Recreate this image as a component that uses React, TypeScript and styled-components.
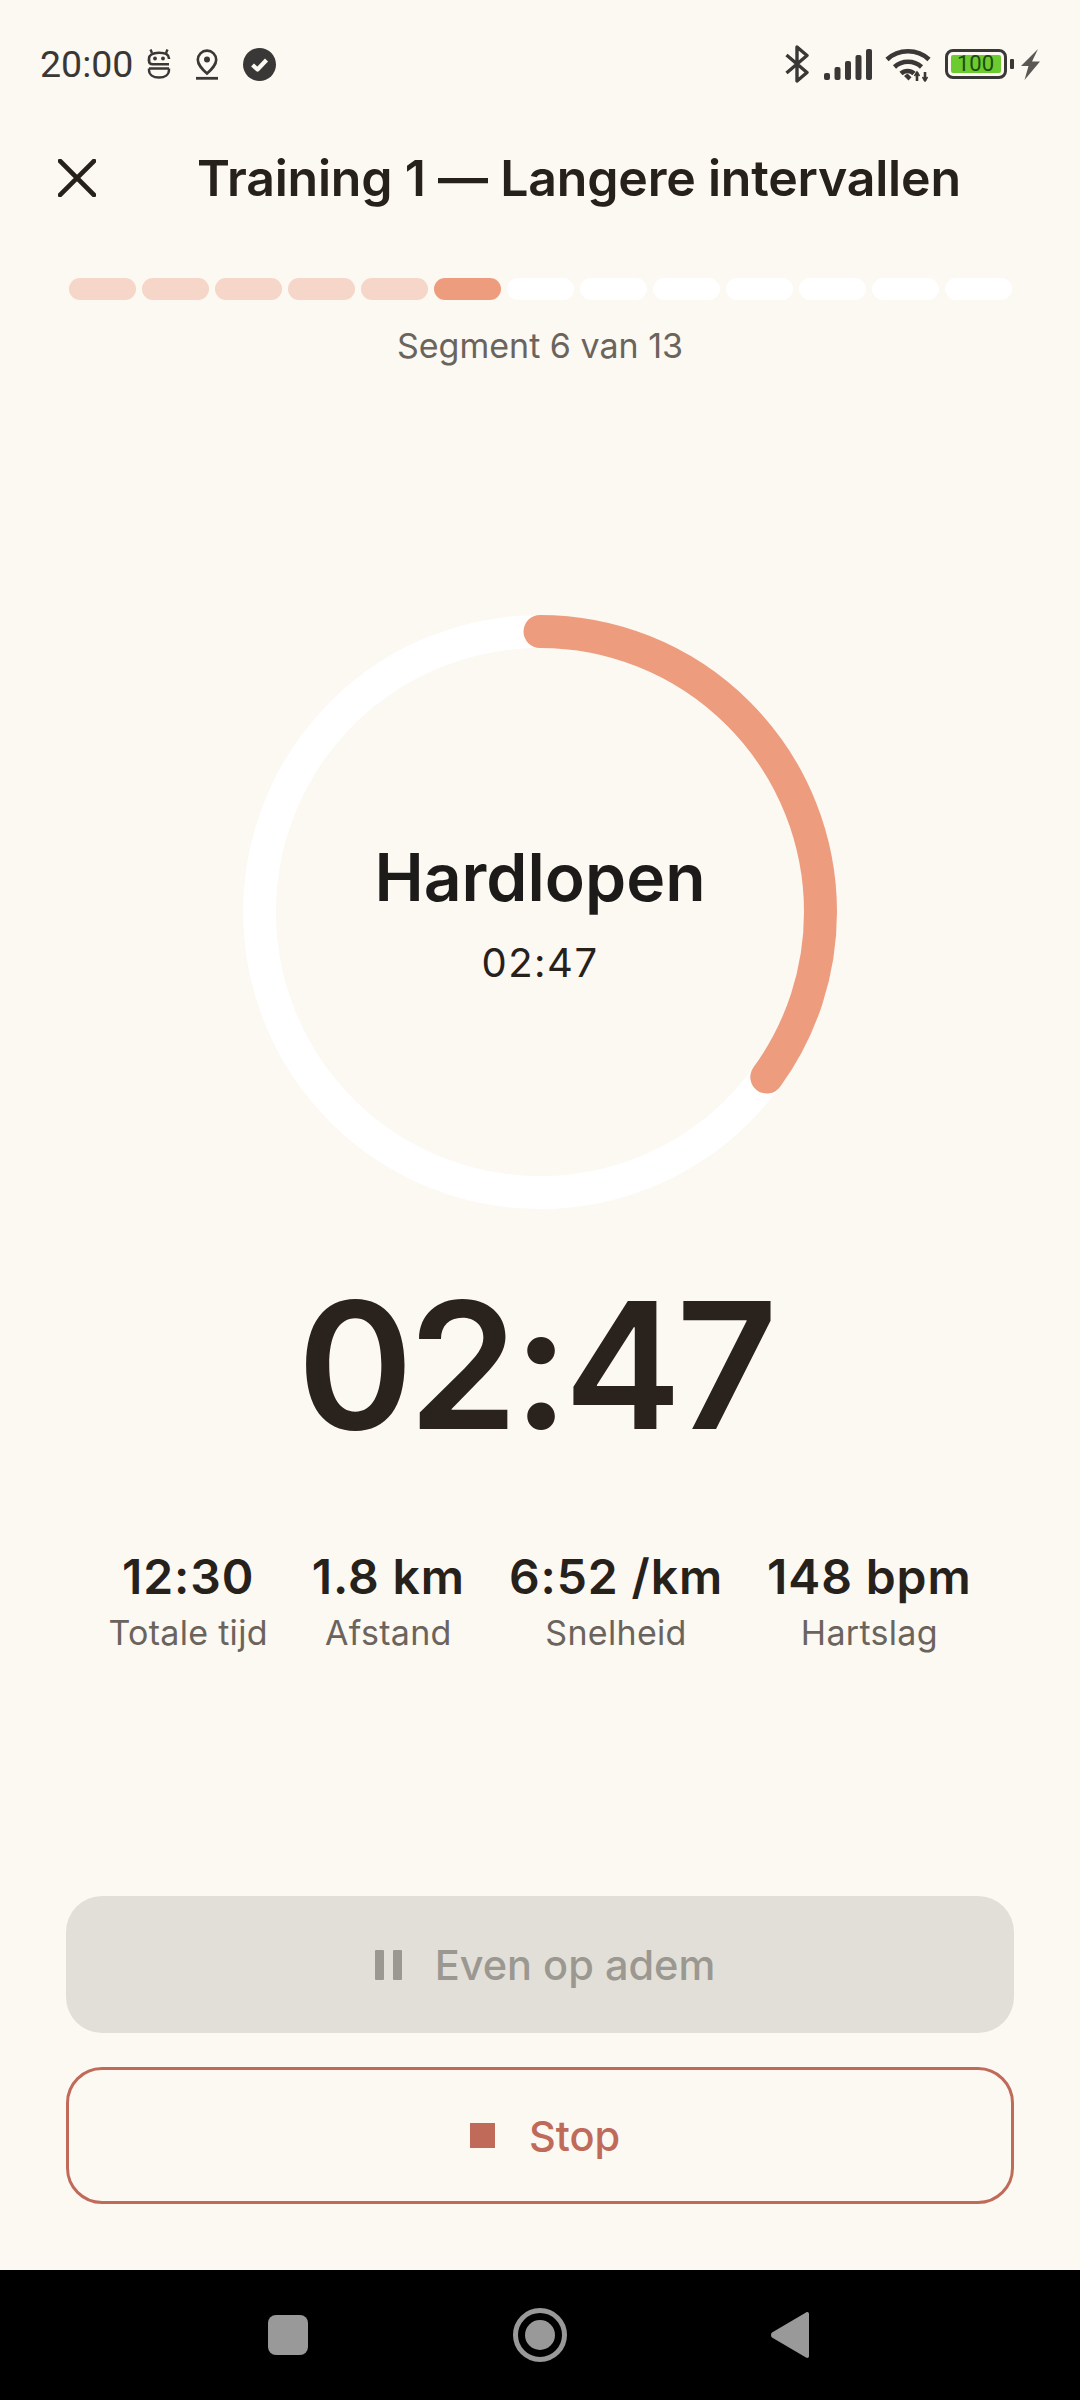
import React from 'react';
import styled, { createGlobalStyle } from 'styled-components';

const GlobalStyle = createGlobalStyle`
  html, body {
    margin: 0;
    padding: 0;
    background: #fcf8f2;
  }
`;

const SEGMENTS = 13;
const CURRENT_SEGMENT = 6;
const RING_RADIUS = 280.5;
const RING_PROGRESS = 0.35;

const stats = [
  { value: '12:30', label: 'Totale tijd' },
  { value: '1.8 km', label: 'Afstand' },
  { value: '6:52 /km', label: 'Snelheid' },
  { value: '148 bpm', label: 'Hartslag' },
];

const RobotIcon = () => (
  <svg width="24" height="30" viewBox="0 0 24 30" fill="none" stroke="#3a3836" strokeWidth="2.6">
    <path d="M3.500 0.500l1.500 3.500M20.500 0.500L19 4" strokeWidth="2.400" />
    <path d="M2 12V9.500C2 6.500 5 3.800 12 3.800S22 6.500 22 9.500V10" />
    <path d="M2 11.500c0 2.500 1.600 3.800 3.800 3.800H22" />
    <path d="M2 19.500h20M2 19.500V21c0 4.500 4 7.500 10 7.500s10-3 10-7.500v-1.500" strokeWidth="2.400" />
    <circle cx="8" cy="9.500" r="1.900" fill="#3a3836" stroke="none" />
    <circle cx="16" cy="9.500" r="1.900" fill="#3a3836" stroke="none" />
  </svg>
);

const PinIcon = () => (
  <svg width="22" height="31" viewBox="0 0 22 31" fill="none" stroke="#3a3836" strokeWidth="2.6">
    <path d="M11 24.500C6 20 1.800 16 1.800 10.800a9.200 9.200 0 0 1 18.400 0C20.200 16 16 20 11 24.500z" />
    <circle cx="11" cy="10.500" r="3" fill="#3a3836" stroke="none" />
    <path d="M0 29.300h22" strokeWidth="2.800" />
  </svg>
);

const CheckBadgeIcon = () => (
  <svg width="33" height="33" viewBox="0 0 33 33">
    <circle cx="16.500" cy="16.500" r="16.500" fill="#3a3836" />
    <path d="M9.500 17l5 4.500 9-9.500" fill="none" stroke="#fcf8f2" strokeWidth="4.200" strokeLinejoin="round" />
  </svg>
);

const BluetoothIcon = () => (
  <svg width="25" height="38" viewBox="0 0 25 38" fill="none" stroke="#3a3836" strokeWidth="3.400">
    <path d="M1.500 10l20.500 17.500L12 36V2l10 8.500L1.500 28" strokeLinejoin="round" />
  </svg>
);

const SignalIcon = () => (
  <svg width="48" height="31" viewBox="0 0 48 31" fill="#3a3836">
    <rect x="0" y="24" width="6" height="7" rx="2" />
    <rect x="10.500" y="18" width="6" height="13" rx="2" />
    <rect x="21" y="12" width="6" height="19" rx="2" />
    <rect x="31.500" y="6" width="6" height="25" rx="2" />
    <rect x="42" y="0" width="6" height="31" rx="2" />
  </svg>
);

const WifiIcon = () => (
  <svg width="46" height="35" viewBox="0 0 46 35" fill="none" stroke="#3a3836" strokeWidth="4.600">
    <path d="M2 12.500C13.500 1.500 32.500 1.500 44 12.500" />
    <path d="M9.500 20c7.500-7 19.500-7 27 0" />
    <path d="M16 26.500c3.700-3.400 9.500-3.400 13 0" />
    <path d="M19 29l4.500 4.500 3-3.200-4-3.800z" fill="#3a3836" stroke="none" />
    <path d="M32 25v9M40 25v9" strokeWidth="2.600" />
    <path d="M29.500 29l2.500-4 2.500 4M37.500 30l2.500 4 2.500-4" strokeWidth="1.600" />
  </svg>
);

const BoltIcon = () => (
  <svg width="19" height="31" viewBox="0 0 19 31" fill="#5a5754">
    <path d="M17 0L0 17h7.500L3.500 31 19 12.500h-8z" />
  </svg>
);

const CloseIcon = () => (
  <svg width="38" height="38" viewBox="0 0 38 38" stroke="#27211c" strokeWidth="4.600" strokeLinecap="square">
    <path d="M2 2l34 34M36 2L2 36" />
  </svg>
);

const PauseIcon = () => (
  <svg width="28" height="30" viewBox="0 0 28 30" fill="#9b9892">
    <rect x="0" y="0" width="9" height="30" rx="1" />
    <rect x="18" y="0" width="9" height="30" rx="1" />
  </svg>
);

const App = () => (
  <>
    <GlobalStyle />
    <Screen>
      <StatusBar>
        <StatusTime>20:00</StatusTime>
        <StatusGroup>
          <RobotIcon />
          <PinIcon />
          <CheckBadgeIcon />
        </StatusGroup>
        <StatusRight>
          <BluetoothIcon />
          <SignalIcon />
          <WifiIcon />
          <BatteryWrap>
            <BatteryBody>
              <BatteryFill>100</BatteryFill>
            </BatteryBody>
            <BatteryNub />
          </BatteryWrap>
          <BoltIcon />
        </StatusRight>
      </StatusBar>

      <Header>
        <CloseIcon />
        <Title>Training 1 — Langere intervallen</Title>
      </Header>

      <Segments>
        {Array.from({ length: SEGMENTS }, (_, i) => (
          <Segment
            key={i}
            $state={i + 1 < CURRENT_SEGMENT ? 'done' : i + 1 === CURRENT_SEGMENT ? 'active' : 'todo'}
          />
        ))}
      </Segments>
      <SegmentCaption>Segment {CURRENT_SEGMENT} van {SEGMENTS}</SegmentCaption>

      <RingArea>
        <svg width="594" height="594" viewBox="0 0 594 594">
          <circle cx="297" cy="297" r={RING_RADIUS} fill="none" stroke="#ffffff" strokeWidth="33" />
          <circle
            cx="297"
            cy="297"
            r={RING_RADIUS}
            fill="none"
            stroke="#ee9c7e"
            strokeWidth="33"
            strokeLinecap="round"
            strokeDasharray={`${2 * Math.PI * RING_RADIUS * RING_PROGRESS} ${2 * Math.PI * RING_RADIUS}`}
            transform="rotate(-90 297 297)"
          />
        </svg>
        <RingCenter>
          <ActivityName>Hardlopen</ActivityName>
          <ActivityTime>02:47</ActivityTime>
        </RingCenter>
      </RingArea>

      <BigTime>02:47</BigTime>

      <StatsRow>
        {stats.map((stat) => (
          <Stat key={stat.label}>
            <StatValue>{stat.value}</StatValue>
            <StatLabel>{stat.label}</StatLabel>
          </Stat>
        ))}
      </StatsRow>

      <Actions>
        <PauseButton>
          <PauseIcon />
          Even op adem
        </PauseButton>
        <StopButton>
          <StopSquare />
          Stop
        </StopButton>
      </Actions>

      <NavBar>
        <NavSquare />
        <NavHome>
          <NavHomeDot />
        </NavHome>
        <svg width="38" height="46" viewBox="0 0 38 46" fill="#999999">
          <path d="M35 0.500c1.500-1 3-0.300 3 1.500v42c0 1.800-1.500 2.500-3 1.500L1 25.500c-1.300-1.200-1.300-3.800 0-5z" />
        </svg>
      </NavBar>
    </Screen>
  </>
);

const Screen = styled.div`
  width: 1080px;
  height: 2400px;
  display: flex;
  flex-direction: column;
  background: #fcf8f2;
  font-family: Inter, 'Liberation Sans', sans-serif;
  color: #27211c;
  overflow: hidden;
`;

const StatusBar = styled.div`
  height: 128px;
  display: flex;
  align-items: center;
  padding: 0 40px;
  flex-shrink: 0;
`;

const StatusTime = styled.span`
  font-family: Roboto, sans-serif;
  font-size: 37.500px;
  color: #3a3836;
  margin-right: 14px;
`;

const StatusGroup = styled.div`
  display: flex;
  align-items: center;
  gap: 25px;
`;

const StatusRight = styled.div`
  margin-left: auto;
  display: flex;
  align-items: center;
  gap: 13.500px;
`;

const BatteryWrap = styled.div`
  display: flex;
  align-items: center;
  gap: 3px;
  margin-right: -6px;
`;

const BatteryBody = styled.div`
  width: 62px;
  height: 30px;
  box-sizing: border-box;
  border: 3px solid #3a3836;
  border-radius: 8px;
  padding: 3px;
  display: flex;
`;

const BatteryFill = styled.div`
  flex: 1;
  background: #6ccb2f;
  border-radius: 2px;
  color: #1f4a10;
  font-family: Roboto, sans-serif;
  font-size: 22px;
  line-height: 18px;
  text-align: center;
`;

const BatteryNub = styled.div`
  width: 4px;
  height: 10px;
  background: #3a3836;
  border-radius: 1px;
`;

const Header = styled.div`
  height: 100px;
  display: flex;
  align-items: center;
  gap: 101px;
  padding-left: 58px;
  flex-shrink: 0;
`;

const Title = styled.h1`
  margin: 0;
  font-size: 50px;
  font-weight: 600;
  letter-spacing: -0.2px;
  color: #27211c;
  white-space: nowrap;
`;

const Segments = styled.div`
  margin: 50px 68px 0 69px;
  display: flex;
  gap: 6px;
`;

const Segment = styled.div<{ $state: 'done' | 'active' | 'todo' }>`
  flex: 1;
  height: 22px;
  border-radius: 11px;
  background: ${({ $state }) =>
    $state === 'done' ? '#f5d6c8' : $state === 'active' ? '#ee9c7e' : '#ffffff'};
`;

const SegmentCaption = styled.div`
  margin-top: 26px;
  text-align: center;
  font-size: 34px;
  line-height: 40px;
  color: #6b645d;
`;

const RingArea = styled.div`
  margin: 249px auto 0;
  width: 594px;
  height: 594px;
  position: relative;
  flex-shrink: 0;

  svg {
    display: block;
  }
`;

const RingCenter = styled.div`
  position: absolute;
  inset: 0;
  display: flex;
  flex-direction: column;
  align-items: center;
  justify-content: center;
`;

const ActivityName = styled.div`
  font-size: 66px;
  font-weight: 600;
  line-height: 78px;
  color: #1d1b1a;
`;

const ActivityTime = styled.div`
  margin-top: 23px;
  font-size: 40px;
  line-height: 48px;
  letter-spacing: 1.500px;
  color: #27211c;
`;

const BigTime = styled.div`
  margin-top: 40px;
  padding-right: 10px;
  text-align: center;
  font-size: 176px;
  font-weight: 610;
  letter-spacing: -5px;
  line-height: 232px;
  color: #2a221d;
`;

const StatsRow = styled.div`
  margin-top: 67px;
  display: flex;
  justify-content: center;
  gap: 44px;
`;

const Stat = styled.div`
  display: flex;
  flex-direction: column;
  align-items: center;
`;

const StatValue = styled.div`
  font-size: 48px;
  font-weight: 600;
  letter-spacing: 0.9px;
  line-height: 58px;
  white-space: nowrap;
`;

const StatLabel = styled.div`
  margin-top: 7px;
  font-size: 34px;
  letter-spacing: 0.3px;
  line-height: 40px;
  color: #6b645d;
  white-space: nowrap;
`;

const Actions = styled.div`
  margin-top: auto;
  padding: 0 66px 66px;
  display: flex;
  flex-direction: column;
  gap: 34px;
`;

const ActionButton = styled.div`
  height: 137px;
  box-sizing: border-box;
  border-radius: 36px;
  padding-left: 10px;
  display: flex;
  align-items: center;
  justify-content: center;
  font-size: 41.500px;
  font-weight: 500;
`;

const PauseButton = styled(ActionButton)`
  background: #e2dfd8;
  color: #9b9892;
  gap: 32px;
`;

const StopButton = styled(ActionButton)`
  border: 3px solid #c06a5a;
  color: #c06a5a;
  gap: 34px;
`;

const StopSquare = styled.div`
  width: 25px;
  height: 25px;
  background: #c06a5a;
`;

const NavBar = styled.div`
  height: 130px;
  flex-shrink: 0;
  background: #000000;
  display: flex;
  align-items: center;
  justify-content: space-between;
  padding: 0 271px 0 268px;
`;

const NavSquare = styled.div`
  width: 40px;
  height: 40px;
  border-radius: 8px;
  background: #999999;
`;

const NavHome = styled.div`
  width: 54px;
  height: 54px;
  box-sizing: border-box;
  border: 5px solid #999999;
  border-radius: 50%;
  display: flex;
  align-items: center;
  justify-content: center;
`;

const NavHomeDot = styled.div`
  width: 30px;
  height: 30px;
  border-radius: 50%;
  background: #999999;
`;

export default App;
